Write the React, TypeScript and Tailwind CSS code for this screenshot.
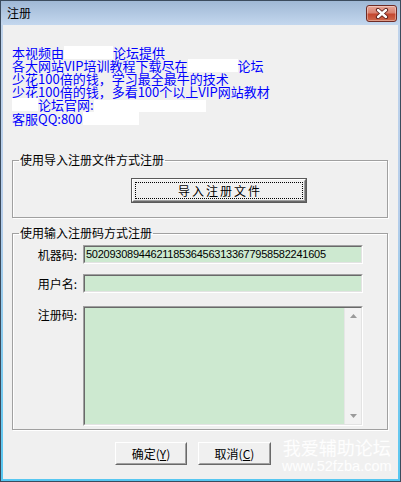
import React from "react";

const cjk = "font-['SimSun','Noto_Sans_CJK_SC',sans-serif]";

function Raised({
  children,
  className = "",
  isDefault = false,
}: {
  children: React.ReactNode;
  className?: string;
  isDefault?: boolean;
}) {
  const inner = (
    <div className="flex-1 flex border border-t-white border-l-white border-b-[#696969] border-r-[#696969]">
      <div className="flex-1 flex border border-t-[#f0f0f0] border-l-[#f0f0f0] border-b-[#a0a0a0] border-r-[#a0a0a0] bg-[#f0f0f0]">
        {children}
      </div>
    </div>
  );
  if (isDefault) {
    return (
      <div className={`flex border border-[#5a5a5a] ${className}`}>{inner}</div>
    );
  }
  return <div className={`flex ${className}`}>{inner}</div>;
}

function Sunken({
  children,
  className = "",
}: {
  children?: React.ReactNode;
  className?: string;
}) {
  return (
    <div
      className={`flex border border-t-[#a0a0a0] border-l-[#a0a0a0] border-b-white border-r-white ${className}`}
    >
      <div className="flex-1 flex border border-t-[#696969] border-l-[#696969] border-b-[#e3e3e3] border-r-[#e3e3e3] bg-[#cde9d0] min-w-0">
        {children}
      </div>
    </div>
  );
}

function Group({
  title,
  children,
  className = "",
}: {
  title: string;
  children: React.ReactNode;
  className?: string;
}) {
  return (
    <fieldset
      className={`w-[376px] ml-[9px] border border-[#a0a0a0] shadow-[inset_1px_1px_0_#fff,1px_1px_0_#fff] ${className}`}
    >
      <legend className="ml-[6px] px-[1px] text-[12px] leading-[14px] text-black">
        {title}
      </legend>
      {children}
    </fieldset>
  );
}

export default function App() {
  return (
    <div
      className={`w-[401px] h-[482px] border border-[#3b4b5d] flex flex-col bg-[linear-gradient(180deg,#a3bcd9_0px,#bfd3eb_24px,#b5cdea_45%,#56c7f1_100%)] ${cjk}`}
    >
      {/* title bar */}
      <div className="h-[24px] flex items-center pl-[6px] pr-[3px] bg-[linear-gradient(180deg,#9fb8d5,#c3d7ee)]">
        <div className="text-[12px] leading-[14px] text-black">注册</div>
        <div className="ml-auto w-[31px] h-[17px] rounded-[3px] border border-[#6e2b25] bg-[linear-gradient(180deg,#e8a697_0%,#d98270_45%,#c4472f_55%,#cf6a4c_100%)] flex items-center justify-center shadow-[inset_0_0_0_1px_rgba(255,255,255,0.35)]">
          <svg width="14" height="11" viewBox="0 0 14 11">
            <path
              d="M3 2 L11 9 M11 2 L3 9"
              stroke="#5a1d17"
              strokeWidth="4.2"
              strokeLinecap="round"
            />
            <path
              d="M3 2 L11 9 M11 2 L3 9"
              stroke="#ffffff"
              strokeWidth="2.4"
              strokeLinecap="round"
            />
          </svg>
        </div>
      </div>

      {/* client */}
      <div className="flex-1 mx-[2px] mb-[2px] bg-[#f0f0f0] relative flex flex-col">
        <div className="pt-[21px] pl-[9px] text-[13px] leading-[13px] text-[#0000ff] font-['Noto_Sans_CJK_SC',sans-serif]">
          <div className="whitespace-nowrap">
            本视频由
            <span className="inline-block align-top w-[49px] h-[13px] bg-white" />
            论坛提供
          </div>
          <div className="whitespace-nowrap">
            各大网站VIP培训教程下载尽在
            <span className="inline-block align-top w-[50px] h-[13px] bg-white" />
            论坛
          </div>
          <div className="whitespace-nowrap">少花100倍的钱，学习最全最牛的技术</div>
          <div className="whitespace-nowrap">少花100倍的钱，多看100个以上VIP网站教材</div>
          <div className="whitespace-nowrap">
            <span className="inline-block align-top w-[26px] h-[13px] bg-white" />
            论坛官网:
            <span className="inline-block align-top mt-[2px] w-[112px] h-[12px] bg-white" />
          </div>
          <div className="whitespace-nowrap">
            客服QQ:800
            <span className="inline-block align-top w-[56px] h-[13px] bg-white" />
          </div>
        </div>

        <Group title="使用导入注册文件方式注册" className="mt-[28px] pb-[14px]">
          <Raised isDefault className="mt-[11px] ml-[118px] w-[176px] h-[25px]">
            <div className="flex-1 m-[1px] border border-dotted border-black flex items-center justify-center text-[12px] leading-[14px] tracking-[2px] pl-[2px] text-black">
              导入注册文件
            </div>
          </Raised>
        </Group>

        <Group title="使用输入注册码方式注册" className="mt-[8px] pb-[3px]">
          <div className="flex items-center mt-[5px]">
            <div className="w-[64px] text-right text-[12px] leading-[14px] text-black">
              机器码:
            </div>
            <Sunken className="ml-[6px] w-[280px] h-[19px]">
              <span className="pl-[1px] font-['Liberation_Sans',sans-serif] text-[11px] leading-[15px] tracking-[-0.25px] text-black">
                50209308944621185364563133677958582241605
              </span>
            </Sunken>
          </div>
          <div className="flex items-center mt-[10px]">
            <div className="w-[64px] text-right text-[12px] leading-[14px] text-black">
              用户名:
            </div>
            <Sunken className="ml-[6px] w-[280px] h-[19px]" />
          </div>
          <div className="flex items-start mt-[13px]">
            <div className="w-[64px] mt-[2px] text-right text-[12px] leading-[14px] text-black">
              注册码:
            </div>
            <Sunken className="ml-[6px] w-[280px] h-[120px]">
              <div className="flex-1" />
              <div className="w-[17px] bg-[#f2f2f2] border-l border-[#e6e6e6] flex flex-col items-center justify-between py-[6px]">
                <svg width="7" height="4" viewBox="0 0 7 4">
                  <path d="M0 4 L3.5 0 L7 4 Z" fill="#9a9a9a" />
                </svg>
                <svg width="7" height="4" viewBox="0 0 7 4">
                  <path d="M0 0 L3.5 4 L7 0 Z" fill="#9a9a9a" />
                </svg>
              </div>
            </Sunken>
          </div>
        </Group>

        <div className="flex mt-[12px] ml-[112px] gap-[11px]">
          <Raised className="w-[72px] h-[23px]">
            <div className="flex-1 flex items-center justify-center text-[12px] leading-[14px] text-black">
              确定(<span className="underline">Y</span>)
            </div>
          </Raised>
          <Raised className="w-[73px] h-[23px]">
            <div className="flex-1 flex items-center justify-center text-[12px] leading-[14px] text-black">
              取消(<span className="underline">C</span>)
            </div>
          </Raised>
        </div>

        {/* watermark */}
        <div className="absolute left-[279px] top-[411px] flex flex-col items-center text-white/90 pointer-events-none">
          <div className="text-[18px] leading-[22px] font-['Noto_Sans_CJK_SC',sans-serif]">
            我爱辅助论坛
          </div>
          <div className="text-[14.5px] leading-[17px] font-['Liberation_Sans',sans-serif]">
            www.52fzba.com
          </div>
        </div>
      </div>
    </div>
  );
}
